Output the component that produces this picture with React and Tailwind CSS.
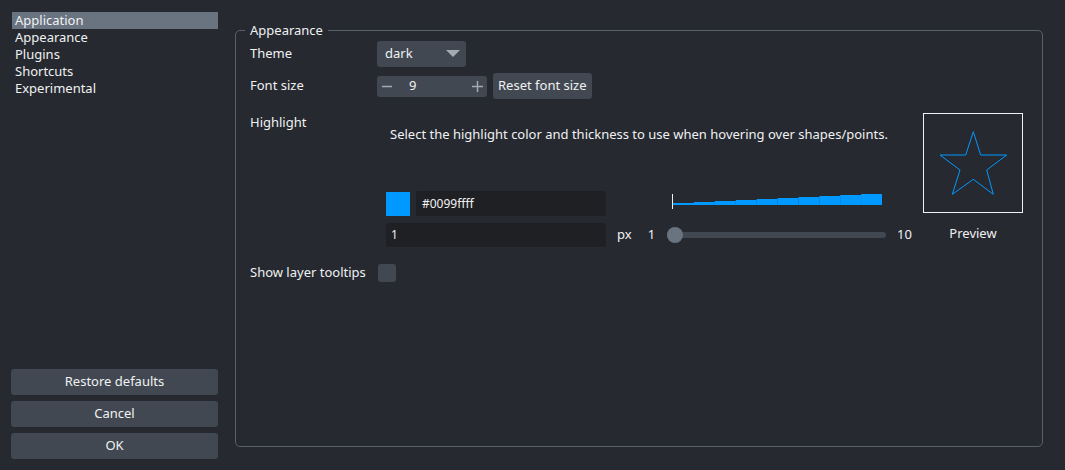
import { useState } from 'react';

const sections = ['Application', 'Appearance', 'Plugins', 'Shortcuts', 'Experimental'];

const WidthBar = () => (
  <svg width="210" height="16" viewBox="0 0 210 16" className="block">
    <line x1="0.5" y1="0" x2="0.5" y2="15" stroke="#f0f1f2" strokeWidth="1" />
    {Array.from({ length: 10 }).map((_, i) => (
      <rect key={i} x={1 + i * 20.9} y={9 - i} width="21" height={2 + i} fill="#0099ff" />
    ))}
  </svg>
);

const Star = () => (
  <svg width="98" height="98" viewBox="1 1 98 98" className="block">
    <polygon
      points="50.3,18.7 57.7,42 83.7,42 63.7,57 70.3,81.3 50.3,66.3 29.3,81.3 37,57 17,42 42.7,42"
      fill="none"
      stroke="#0099ff"
      strokeWidth="1"
    />
  </svg>
);

const App = () => {
  const [selected, setSelected] = useState(0);
  const [tooltips, setTooltips] = useState(false);

  return (
    <div
      className="w-[1065px] h-[470px] bg-[#262930] text-[#f0f1f2] text-[13px] flex overflow-hidden"
      style={{ fontFamily: '"Noto Sans", "DejaVu Sans", sans-serif' }}
    >
      {/* Sidebar */}
      <div className="w-[230px] shrink-0 flex flex-col justify-between pt-[12px] pb-[11px] pl-[11px] pr-[12px]">
        <div className="flex flex-col">
          {sections.map((s, i) => (
            <button
              key={s}
              onClick={() => setSelected(i)}
              className={`text-left h-[17px] leading-[17px] pl-[3px] ml-[1px] ${
                selected === i ? 'bg-[#6a7380]' : ''
              }`}
            >
              {s}
            </button>
          ))}
        </div>
        <div className="flex flex-col gap-[6px]">
          <button className="h-[26px] bg-[#414851] rounded-[3px]">Restore defaults</button>
          <button className="h-[26px] bg-[#414851] rounded-[3px]">Cancel</button>
          <button className="h-[26px] bg-[#414851] rounded-[3px]">OK</button>
        </div>
      </div>

      {/* Settings panel */}
      <div className="flex-1 min-w-0 pl-[5px] pt-[22px] pr-[22px] pb-[23px]">
        <fieldset className="h-full border border-[#5a616b] rounded-[5px] pl-[14px] pr-[19px]">
          <legend className="ml-[-5px] px-[5px] leading-[17px]">Appearance</legend>

          <div className="flex flex-col mt-[2px]">
            {/* Theme */}
            <div className="flex items-center h-[26px]">
              <div className="w-[127px]">Theme</div>
              <button className="w-[89px] h-[26px] bg-[#414851] rounded-[3px] flex items-center justify-between pl-[8px] pr-[6px]">
                <span>dark</span>
                <svg width="14" height="8" viewBox="0 0 14 8">
                  <polygon points="0,0 14,0 7,7" fill="#a5abb3" />
                </svg>
              </button>
            </div>

            {/* Font size */}
            <div className="flex items-center h-[26px] mt-[6px]">
              <div className="w-[127px]">Font size</div>
              <div className="w-[110px] h-[21px] bg-[#414851] rounded-[3px] flex items-center pl-[5px] pr-[4px]">
                <svg width="11" height="11" viewBox="0 0 11 11" className="block">
                  <line x1="0" y1="5.5" x2="10" y2="5.5" stroke="#a5abb3" strokeWidth="1.5" />
                </svg>
                <span className="flex-1 pl-[16px]">9</span>
                <svg width="11" height="11" viewBox="0 0 11 11" className="block">
                  <line x1="0" y1="5.5" x2="11" y2="5.5" stroke="#a5abb3" strokeWidth="1.5" />
                  <line x1="5.5" y1="0" x2="5.5" y2="11" stroke="#a5abb3" strokeWidth="1.5" />
                </svg>
              </div>
              <button className="ml-[6px] h-[26px] px-[5px] bg-[#414851] rounded-[3px]">Reset font size</button>
            </div>

            {/* Highlight */}
            <div className="flex mt-[14px]">
              <div className="w-[127px] leading-[18px]">Highlight</div>
              <div className="w-[546px] flex flex-col pl-[9px]">
                <div className="pl-[4px] mt-[12px] leading-[18px]">
                  Select the highlight color and thickness to use when hovering over shapes/points.
                </div>
                <div className="flex items-center h-[25px] mt-[48px]">
                  <div className="w-[24px] h-[24px] bg-[#0099ff]" />
                  <div className="ml-[6px] w-[190px] h-[25px] bg-[#1f2024] rounded-[2px] pl-[6px] leading-[25px] text-[12px]">
                    #0099ffff
                  </div>
                  <div className="ml-[66px] mt-[-3px]">
                    <WidthBar />
                  </div>
                </div>
                <div className="flex items-center h-[24px] mt-[7px]">
                  <div className="w-[220px] h-[24px] bg-[#1f2024] rounded-[2px] pl-[5px] leading-[24px] text-[12px]">1</div>
                  <span className="ml-[11px]">px</span>
                  <span className="ml-[16px]">1</span>
                  <div className="ml-[12px] w-[219px] h-[6px] bg-[#414851] rounded-full relative">
                    <div className="absolute left-0 top-[-5px] w-[16px] h-[16px] rounded-full bg-[#6a7380]" />
                  </div>
                  <span className="ml-[11px]">10</span>
                </div>
              </div>
              <div className="w-[100px] flex flex-col items-center">
                <div className="w-[100px] h-[100px] border border-[#f0f1f2]">
                  <Star />
                </div>
                <div className="mt-[11px] leading-[18px]">Preview</div>
              </div>
            </div>

            {/* Show layer tooltips */}
            <div className="flex items-center h-[18px] mt-[17px]">
              <div className="w-[128px]">Show layer tooltips</div>
              <button
                onClick={() => setTooltips(!tooltips)}
                className="w-[18px] h-[18px] bg-[#414851] rounded-[3px]"
              />
            </div>
          </div>
        </fieldset>
      </div>
    </div>
  );
};

export default App;
